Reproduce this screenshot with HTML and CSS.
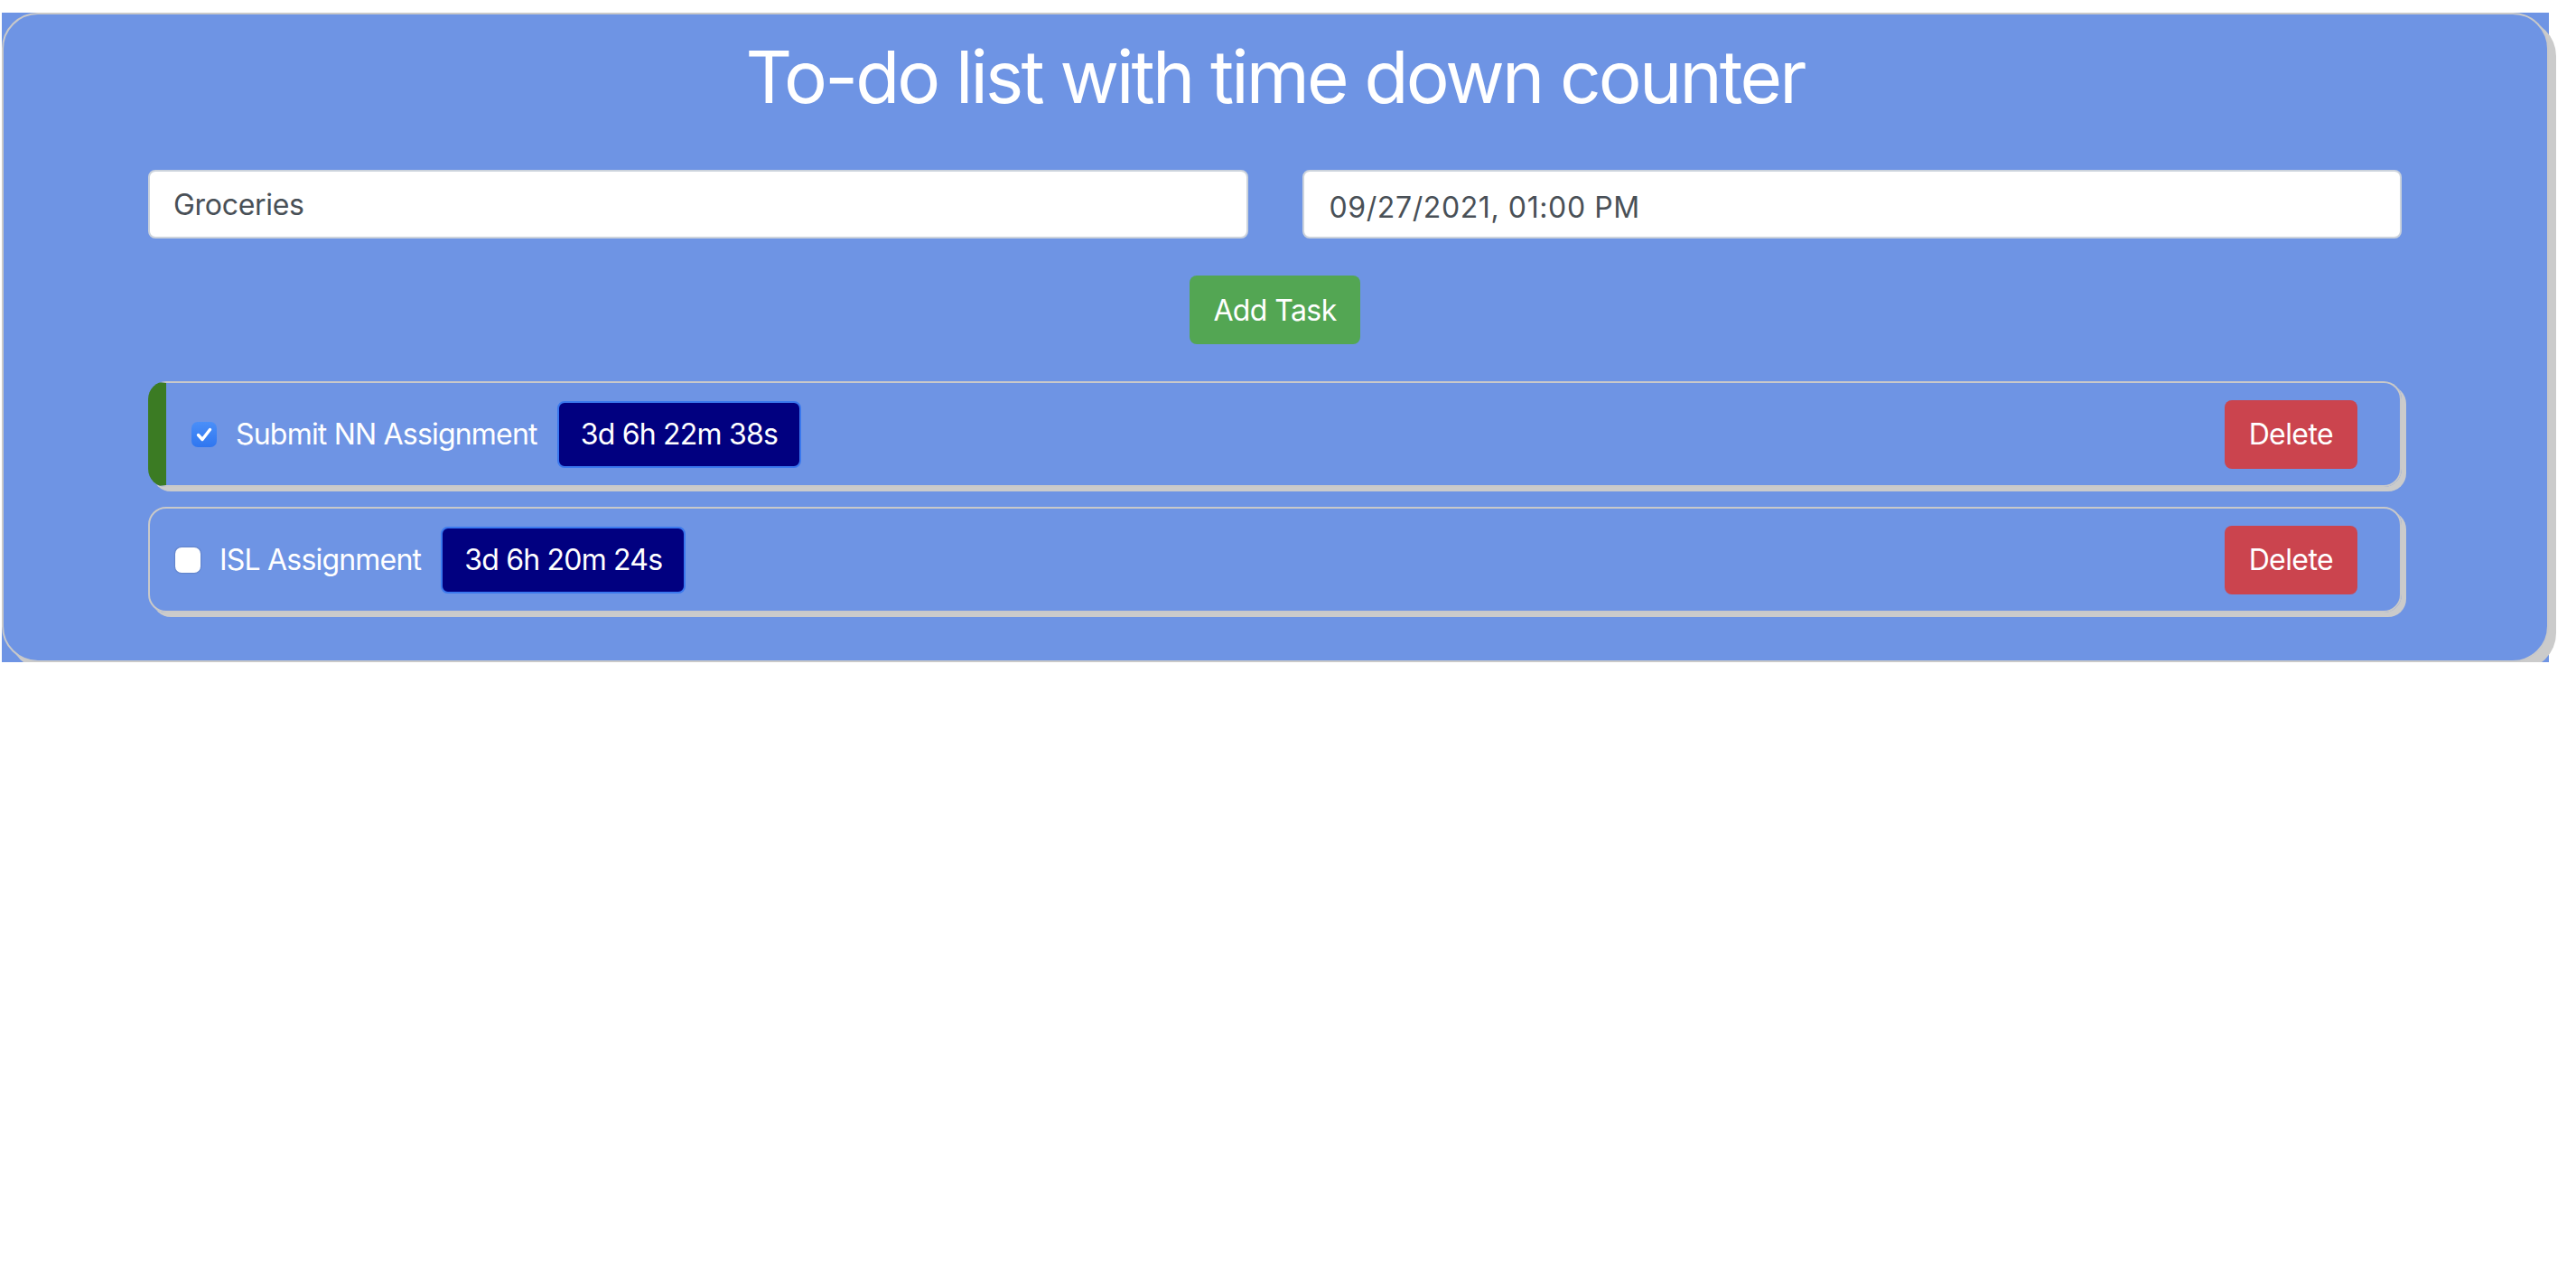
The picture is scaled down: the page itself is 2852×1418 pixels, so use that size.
FILE: index.html
```html
<!DOCTYPE html>
<html lang="en">
<head>
<meta charset="utf-8">
<title>To-do list with time down counter</title>
<link rel="stylesheet" href="styles.css">
</head>
<body>
<div class="app">
  <div class="card">
    <h1 class="title">To-do list with time down counter</h1>
    <div class="form-row">
      <input class="field" type="text" value="Groceries">
      <input class="field field-date" type="text" value="09/27/2021, 01:00 PM">
    </div>
    <div class="actions">
      <button class="btn btn-add" type="button">Add Task</button>
    </div>
    <ul class="tasks">
      <li class="task task-done">
        <input class="check" type="checkbox" checked>
        <span class="task-name">Submit NN Assignment</span>
        <span class="timer">3d 6h 22m 38s</span>
        <button class="btn btn-delete" type="button">Delete</button>
      </li>
      <li class="task">
        <input class="check" type="checkbox">
        <span class="task-name">ISL Assignment</span>
        <span class="timer">3d 6h 20m 24s</span>
        <button class="btn btn-delete" type="button">Delete</button>
      </li>
    </ul>
  </div>
</div>
</body>
</html>
```

FILE: styles.css
```css
html, body {
  margin: 0;
  padding: 0;
  background: #ffffff;
}

body {
  font-family: Inter, "Noto Sans", "Liberation Sans", sans-serif;
  color: #ffffff;
  letter-spacing: -0.8px;
}

.app {
  margin: 14px 30px 0 2px;
  background: #6e94e4;
}

.card {
  border: 2px solid #c9c9c9;
  border-radius: 40px;
  box-shadow: 8px 8px 0 #cbcbcb;
  padding: 21px 161px 53px 160px;
  background: #6e94e4;
}

.title {
  margin: 0;
  font-size: 80px;
  line-height: 96px;
  font-weight: 400;
  text-align: center;
  color: #ffffff;
  letter-spacing: -2.85px;
}

.form-row {
  margin-top: 55px;
  display: grid;
  grid-template-columns: 1fr 1fr;
  column-gap: 60px;
}

.field {
  box-sizing: border-box;
  height: 76px;
  width: 100%;
  padding: 0 26px;
  border: 2px solid #ccd3dc;
  border-radius: 8px;
  background: #ffffff;
  font-family: Inter, "Noto Sans", "Liberation Sans", sans-serif;
  font-size: 32px;
  color: #495057;
  outline: none;
  letter-spacing: -0.3px;
}

.field-date {
  padding-left: 28px;
  padding-top: 6px;
  letter-spacing: 0.6px;
}

.actions {
  margin-top: 41px;
  display: flex;
  justify-content: center;
}

.btn {
  box-sizing: border-box;
  height: 76px;
  border: none;
  border-radius: 8px;
  font-family: Inter, "Noto Sans", "Liberation Sans", sans-serif;
  font-size: 32px;
  color: #ffffff;
  cursor: pointer;
  letter-spacing: -0.6px;
}

.btn-add {
  padding: 0 26px;
  background: #53a653;
}

.tasks {
  list-style: none;
  margin: 41px 0 0 0;
  padding: 0;
  display: flex;
  flex-direction: column;
  gap: 22px;
}

.task {
  box-sizing: border-box;
  height: 117px;
  display: flex;
  align-items: center;
  border: 2px solid #c9c9c9;
  border-radius: 20px;
  box-shadow: 5px 5px 0 #cbcbcb;
  padding: 0 47px 0 28px;
}

.task-done {
  border-left: 20px solid #3b7b23;
}

.check {
  appearance: none;
  -webkit-appearance: none;
  margin: 0;
  width: 28px;
  height: 28px;
  border-radius: 7px;
  background: #ffffff;
  box-shadow: 0 0 1px 1px rgba(0, 0, 0, 0.12);
  flex: none;
}

.check:checked {
  background-color: #3a80f5;
  background-image: url("data:image/svg+xml,%3Csvg xmlns='http://www.w3.org/2000/svg' viewBox='0 0 28 28'%3E%3Cpath d='M7.5 14.5 L12 19.5 L20.5 8.5' fill='none' stroke='white' stroke-width='3.4' stroke-linecap='round' stroke-linejoin='round'/%3E%3C/svg%3E"), linear-gradient(#4a8ff8, #2f76f0);
  background-size: 100% 100%;
  box-shadow: none;
}

.task-name {
  margin-left: 21px;
  font-size: 32px;
  color: #ffffff;
}

.timer {
  box-sizing: border-box;
  margin-left: 22px;
  height: 74px;
  padding: 0 24px;
  display: inline-flex;
  align-items: center;
  background: #010080;
  border: 2px solid #3a78ee;
  border-radius: 8px;
  font-size: 32px;
  color: #ffffff;
}

.btn-delete {
  margin-left: auto;
  padding: 0 27px;
  background: #cb444e;
}
```
